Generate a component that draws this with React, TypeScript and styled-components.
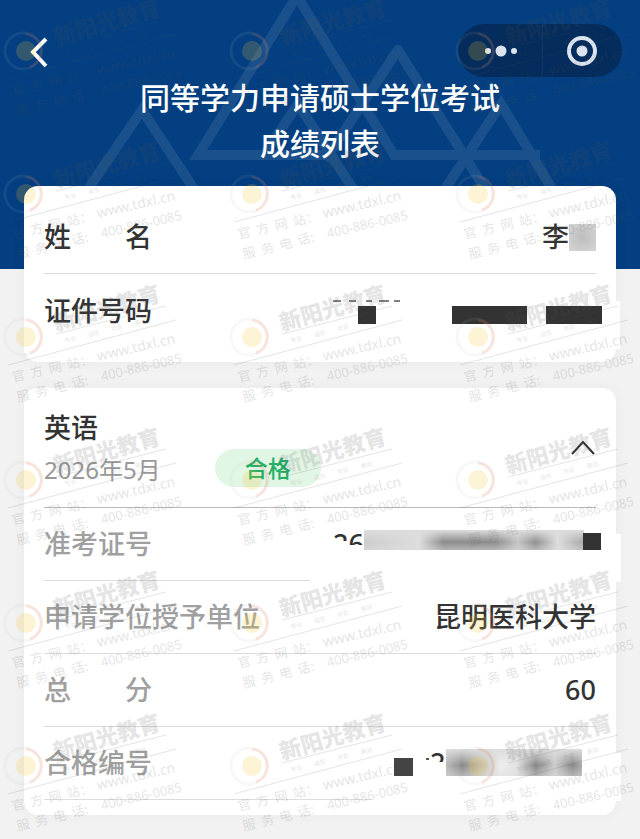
import { useState } from "react";
import styled, { createGlobalStyle } from "styled-components";

const GlobalStyle = createGlobalStyle`
  * {
    box-sizing: border-box;
  }

  body {
    margin: 0;
    background: #f2f2f2;
    font-family: "Noto Sans", "Noto Sans CJK SC", sans-serif;
    color: #333;
  }
`;

const Page = styled.div`
  position: relative;
  min-height: 100vh;
  overflow: hidden;
  padding-bottom: 22px;
`;

const Hero = styled.header`
  position: relative;
  padding: 24px 18px 104px;
  background: #033f81;
  color: #fff;
`;

const HeroArt = styled.svg`
  position: absolute;
  top: 0;
  left: 50%;
  margin-left: -320px;
`;

const NavBar = styled.nav`
  position: relative;
  display: flex;
  align-items: center;
  justify-content: space-between;
`;

const IconButton = styled.button`
  display: flex;
  align-items: center;
  justify-content: center;
  flex: 1;
  padding: 0;
  border: 0;
  background: none;
  color: inherit;
  cursor: pointer;
`;

const BackButton = styled(IconButton)`
  flex: none;
  width: 40px;
  height: 40px;
`;

const Capsule = styled.div`
  display: flex;
  width: 164px;
  height: 53px;
  padding-left: 4px;
  border-radius: 27px;
  background: #042c5c;

  ${IconButton} + ${IconButton} {
    border-left: 1px solid #0c3768;
  }
`;

const Title = styled.h1`
  position: relative;
  margin: -4px 0 0;
  font-family: "Noto Sans CJK SC", sans-serif;
  font-size: 30px;
  font-weight: 500;
  line-height: 46px;
  text-align: center;
`;

const Content = styled.main`
  position: relative;
  display: grid;
  gap: 26px;
  margin-top: -83px;
  padding: 0 24px;
`;

const Card = styled.section`
  padding: 15px 20px;
  border-radius: 14px;
  background: #fff;
  box-shadow: 0 0 16px rgba(0, 0, 0, 0.04);
`;

const List = styled.dl`
  margin: 0;
`;

const Row = styled.div<{ $line?: string }>`
  display: flex;
  align-items: center;
  justify-content: space-between;
  height: 73px;
  border-bottom: 1px solid #ddd;
  border-bottom-width: ${({ $line }) => ($line === "none" ? "0" : "1px")};
`;

const Label = styled.dt<{ $muted?: boolean }>`
  font-size: 27px;
  font-weight: 500;
  line-height: 40px;
  white-space: pre;
  color: ${({ $muted }) => ($muted ? "#a0a0a0" : "#333")};
`;

const Value = styled.dd`
  position: relative;
  display: flex;
  align-items: center;
  margin: 0;
  font-size: 27px;
  font-weight: 500;
  line-height: 40px;
`;

const NameMask = styled.span`
  width: 27px;
  height: 27px;
  background: radial-gradient(#bdbdbd, #d6d6d6);
`;

const MaskArt = styled.svg`
  position: absolute;
  right: -25px;
  top: 50%;
  margin-top: -26px;
`;

const SubjectHeader = styled.div`
  display: flex;
  align-items: center;
  justify-content: space-between;
  padding: 5px 0 19px;
  border-bottom: 1px solid #b8b8b8;
`;

const Subject = styled.h2`
  margin: 0;
  font-size: 27px;
  font-weight: 500;
  line-height: 40px;
`;

const SubjectMeta = styled.div`
  display: flex;
  align-items: center;
  gap: 54px;
  height: 40px;
  font-size: 24px;
  color: #999;
`;

const Badge = styled.span`
  width: 106px;
  border-radius: 19px;
  background: #e2f6e5;
  color: #21b066;
  font-size: 23px;
  font-weight: 500;
  line-height: 38px;
  text-align: center;
`;

const ToggleButton = styled(IconButton)`
  flex: none;
  width: 26px;
  height: 40px;
`;

const WatermarkLayer = styled.svg`
  position: absolute;
  top: 0;
  left: 0;
  width: 100%;
  height: 100%;
  pointer-events: none;
  font-family: "Noto Sans CJK SC", sans-serif;

  text {
    white-space: pre;
  }
`;

const Watermark = ({ x, y }: { x: number; y: number }) => (
  <g transform={`translate(${x} ${y})`}>
    <circle cx="26" cy="51" r="10" fill="#f7c52c" opacity="0.2" />
    <circle cx="23" cy="51" r="18" fill="none" stroke="#bbb" strokeWidth="3" opacity="0.1" />
    <path d="M26 34a17 17 0 0 1 4 33" fill="none" stroke="#f26a3c" strokeWidth="3" opacity="0.14" />
    <g fill="#555" opacity="0.15">
      <text transform="translate(56 45) rotate(-16)" fontSize="22" fontWeight="900">新阳光教育</text>
      <text transform="translate(65 57) rotate(-14)" fontSize="6">
        {"专业         诚信         务实         高效"}
      </text>
      <path d="M56 48 166 20M8 79 176 34" stroke="#555" />
      <text transform="translate(13 96) rotate(-13)" fontSize="13">{"官  方  网  站："}</text>
      <text transform="translate(98 75) rotate(-13)" fontSize="14" fontFamily="Noto Sans">www.tdxl.cn</text>
      <text transform="translate(18 116) rotate(-14)" fontSize="13">{"服  务  电  话:"}</text>
      <text transform="translate(102 95) rotate(-13)" fontSize="13" fontFamily="Noto Sans">400-886-0085</text>
    </g>
  </g>
);

const IdNumberMask = () => (
  <MaskArt width="292" height="64" viewBox="0 0 292 64" aria-label="证件号码已隐藏" role="img">
    <rect x="0" y="16" width="291" height="48" fill="#fff" />
    <path d="M4 16h8M20 16h7M37 16h6M50 16h10M65 16h6" stroke="#555" strokeWidth="1.5" />
    <g fill="#333">
      <rect x="29" y="21" width="18" height="18" />
      <rect x="123" y="21" width="75" height="18" />
      <rect x="217" y="21" width="56" height="18" />
    </g>
  </MaskArt>
);

const TicketMask = () => (
  <MaskArt width="311" height="64" viewBox="0 0 311 64" aria-label="准考证号已隐藏" role="img">
    <defs>
      <linearGradient id="ticket">
        <stop offset="0" stopColor="#ccc" />
        <stop offset="0.25" stopColor="#dedede" />
        <stop offset="0.36" stopColor="#8c8c8c" />
        <stop offset="0.6" stopColor="#8c8c8c" />
        <stop offset="0.7" stopColor="#c4c4c4" />
        <stop offset="0.78" stopColor="#8f8f8f" />
        <stop offset="0.88" stopColor="#ddd" />
        <stop offset="1" stopColor="#a5a5a5" />
      </linearGradient>
      <linearGradient id="ticketFade" x1="0" y1="0" x2="0" y2="1">
        <stop offset="0" stopColor="#ddd" />
        <stop offset="0.6" stopColor="#ddd" stopOpacity="0" />
        <stop offset="1" stopColor="#ddd" stopOpacity="0.5" />
      </linearGradient>
      <clipPath id="ticketClip">
        <rect x="0" y="16" width="38" height="7" />
        <rect x="38" y="16" width="22" height="11" />
      </clipPath>
    </defs>
    <rect x="0" y="16" width="311" height="48" fill="#fff" />
    <text x="23" y="36" fontSize="27" fontWeight="500" fill="#333" clipPath="url(#ticketClip)">26</text>
    <rect x="54" y="12" width="220" height="20" fill="url(#ticket)" />
    <rect x="54" y="12" width="220" height="20" fill="url(#ticketFade)" />
    <rect x="273" y="15" width="18" height="17" fill="#333" />
  </MaskArt>
);

const CertificateMask = () => (
  <MaskArt width="250" height="64" viewBox="0 0 250 64" aria-label="合格编号已隐藏" role="img">
    <defs>
      <linearGradient id="cert">
        <stop offset="0" stopColor="#bbb" />
        <stop offset="0.12" stopColor="#888" />
        <stop offset="0.25" stopColor="#bbb" />
        <stop offset="0.4" stopColor="#eee" />
        <stop offset="0.52" stopColor="#e2e2e2" />
        <stop offset="0.66" stopColor="#858585" />
        <stop offset="0.8" stopColor="#ccc" />
        <stop offset="0.93" stopColor="#888" />
        <stop offset="1" stopColor="#aaa" />
      </linearGradient>
      <linearGradient id="certFade" x1="0" y1="0" x2="0" y2="1">
        <stop offset="0" stopColor="#ddd" />
        <stop offset="0.6" stopColor="#ddd" stopOpacity="0" />
        <stop offset="1" stopColor="#ddd" stopOpacity="0.5" />
      </linearGradient>
      <clipPath id="certClip">
        <rect x="50" y="14" width="30" height="11" />
      </clipPath>
    </defs>
    <rect x="0" y="16" width="250" height="48" fill="#fff" />
    <rect x="23" y="21" width="19" height="18" fill="#444" />
    <path d="M55 22h3" stroke="#555" strokeWidth="2" />
    <text x="59" y="36" fontSize="27" fontWeight="500" fill="#333" clipPath="url(#certClip)">2</text>
    <rect x="75" y="12" width="136" height="27" fill="url(#cert)" />
    <rect x="75" y="12" width="136" height="27" fill="url(#certFade)" />
  </MaskArt>
);

const App = () => {
  const [open, setOpen] = useState(true);

  return (
    <>
      <GlobalStyle />
      <Page>
        <Hero>
          <HeroArt width="640" height="190" viewBox="0 0 640 190" fill="none" stroke="#1a518c" strokeWidth="10" aria-hidden="true">
            <path d="M86 192 142 110 196 192" />
            <path d="M325 155H198L297 -4 394 155H540" />
            <path d="M264 155 298 104 355 192" />
            <path d="M325 160 398 50 487 192" strokeLinejoin="round" />
            <path d="M443 192 501 104 554 192" />
          </HeroArt>
          <NavBar>
            <BackButton type="button" aria-label="返回">
              <svg width="40" height="40" viewBox="0 0 40 40" fill="none" stroke="currentColor" strokeWidth="4">
                <path d="M28 8 15 21 28 35" />
              </svg>
            </BackButton>
            <Capsule>
              <IconButton type="button" aria-label="更多">
                <svg width="34" height="12" viewBox="0 0 34 12" fill="#dce4f0">
                  <circle cx="3" cy="6" r="3" />
                  <circle cx="16" cy="6" r="5.5" />
                  <circle cx="29" cy="6" r="3" />
                </svg>
              </IconButton>
              <IconButton type="button" aria-label="关闭">
                <svg width="32" height="32" viewBox="0 0 32 32" fill="none" stroke="#dce4f0" strokeWidth="4">
                  <circle cx="16" cy="16" r="13" />
                  <circle cx="16" cy="16" r="5.5" fill="#dce4f0" stroke="none" />
                </svg>
              </IconButton>
            </Capsule>
          </NavBar>
          <Title>
            同等学力申请硕士学位考试
            <br />
            成绩列表
          </Title>
        </Hero>

        <Content>
          <Card>
            <List>
              <Row>
                <Label>{"姓\u3000\u3000名"}</Label>
                <Value>
                  李<NameMask />
                </Value>
              </Row>
              <Row $line="none">
                <Label>证件号码</Label>
                <Value>
                  <IdNumberMask />
                </Value>
              </Row>
            </List>
          </Card>

          <Card>
            <SubjectHeader>
              <div>
                <Subject>英语</Subject>
                <SubjectMeta>
                  2026年5月
                  <Badge>合格</Badge>
                </SubjectMeta>
              </div>
              <ToggleButton type="button" aria-label="展开或收起" aria-expanded={open} onClick={() => setOpen(!open)}>
                <svg width="26" height="16" viewBox="0 0 26 16" fill="none" stroke="#333" strokeWidth="2">
                  <path d={open ? "M2 14 13 2 24 14" : "M2 2 13 14 24 2"} />
                </svg>
              </ToggleButton>
            </SubjectHeader>
            {open && (
              <List>
                <Row>
                  <Label $muted>准考证号</Label>
                  <Value>
                    <TicketMask />
                  </Value>
                </Row>
                <Row>
                  <Label $muted>申请学位授予单位</Label>
                  <Value>昆明医科大学</Value>
                </Row>
                <Row>
                  <Label $muted>{"总\u3000\u3000分"}</Label>
                  <Value>60</Value>
                </Row>
                <Row>
                  <Label $muted>合格编号</Label>
                  <Value>
                    <CertificateMask />
                  </Value>
                </Row>
              </List>
            )}
          </Card>
        </Content>

        <WatermarkLayer aria-hidden="true">
          {[0, 143, 286, 429, 572, 715].map((y) =>
            [0, 226, 452].map((x) => <Watermark key={`${x}-${y}`} x={x} y={y} />)
          )}
        </WatermarkLayer>
      </Page>
    </>
  );
};

export default App;
